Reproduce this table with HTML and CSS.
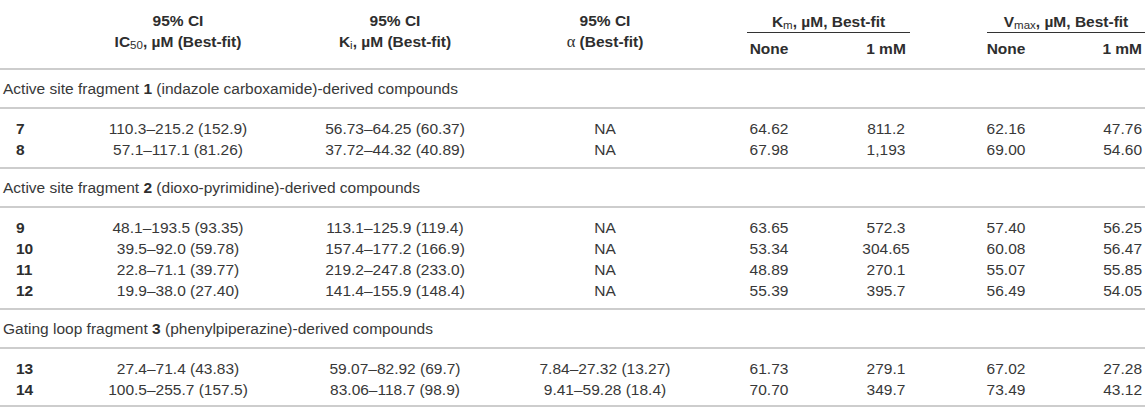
FILE: index.html
```html
<!DOCTYPE html>
<html>
<head>
<meta charset="UTF-8">
<title>Fragment inhibition table</title>
<link rel="stylesheet" href="styles.css">
</head>
<body>
<table class="data">
  <colgroup>
    <col class="c-id"><col class="c-ic"><col class="c-ki"><col class="c-al">
    <col class="c-kn"><col class="c-km"><col class="c-vn"><col class="c-vm">
  </colgroup>
  <thead>
    <tr>
      <th rowspan="2" class="top"></th>
      <th rowspan="2" class="top">95% CI<br>IC<sub>50</sub>, µM (Best-fit)</th>
      <th rowspan="2" class="top">95% CI<br>K<sub>i</sub>, µM (Best-fit)</th>
      <th rowspan="2" class="top">95% CI<br><span class="greek">α</span> (Best-fit)</th>
      <th colspan="2" class="grp"><div class="grp-km">K<sub>m</sub>, µM, Best-fit</div></th>
      <th colspan="2" class="grp"><div class="grp-v">V<sub>max</sub>, µM, Best-fit</div></th>
    </tr>
    <tr class="sub-head">
      <th>None</th>
      <th>1 mM</th>
      <th>None</th>
      <th class="last">1 mM</th>
    </tr>
  </thead>
  <tbody>
    <tr class="section"><td colspan="8">Active site fragment <b>1</b> (indazole carboxamide)-derived compounds</td></tr>
    <tr class="first">
      <td class="id">7</td><td>110.3–215.2 (152.9)</td><td>56.73–64.25 (60.37)</td><td>NA</td>
      <td>64.62</td><td>811.2</td><td>62.16</td><td class="last">47.76</td>
    </tr>
    <tr class="end">
      <td class="id">8</td><td>57.1–117.1 (81.26)</td><td>37.72–44.32 (40.89)</td><td>NA</td>
      <td>67.98</td><td>1,193</td><td>69.00</td><td class="last">54.60</td>
    </tr>
    <tr class="section"><td colspan="8">Active site fragment <b>2</b> (dioxo-pyrimidine)-derived compounds</td></tr>
    <tr class="first">
      <td class="id">9</td><td>48.1–193.5 (93.35)</td><td>113.1–125.9 (119.4)</td><td>NA</td>
      <td>63.65</td><td>572.3</td><td>57.40</td><td class="last">56.25</td>
    </tr>
    <tr>
      <td class="id">10</td><td>39.5–92.0 (59.78)</td><td>157.4–177.2 (166.9)</td><td>NA</td>
      <td>53.34</td><td>304.65</td><td>60.08</td><td class="last">56.47</td>
    </tr>
    <tr>
      <td class="id">11</td><td>22.8–71.1 (39.77)</td><td>219.2–247.8 (233.0)</td><td>NA</td>
      <td>48.89</td><td>270.1</td><td>55.07</td><td class="last">55.85</td>
    </tr>
    <tr class="end">
      <td class="id">12</td><td>19.9–38.0 (27.40)</td><td>141.4–155.9 (148.4)</td><td>NA</td>
      <td>55.39</td><td>395.7</td><td>56.49</td><td class="last">54.05</td>
    </tr>
    <tr class="section"><td colspan="8">Gating loop fragment <b>3</b> (phenylpiperazine)-derived compounds</td></tr>
    <tr class="first">
      <td class="id">13</td><td>27.4–71.4 (43.83)</td><td>59.07–82.92 (69.7)</td><td>7.84–27.32 (13.27)</td>
      <td>61.73</td><td>279.1</td><td>67.02</td><td class="last">27.28</td>
    </tr>
    <tr class="final">
      <td class="id">14</td><td>100.5–255.7 (157.5)</td><td>83.06–118.7 (98.9)</td><td>9.41–59.28 (18.4)</td>
      <td>70.70</td><td>349.7</td><td>73.49</td><td class="last">43.12</td>
    </tr>
  </tbody>
</table>
</body>
</html>
```

FILE: styles.css
```css
body { margin:0; background:#fff; }

.data { width:1145px; table-layout:fixed; border-collapse:collapse; font-family:"Liberation Sans", Arial, sans-serif; font-size:15.5px; line-height:21px; color:#383838; }
.c-id { width:60px; }
.c-ic { width:236px; }
.c-ki { width:198px; }
.c-al { width:222px; }
.c-kn { width:106px; }
.c-km { width:128px; }
.c-vn { width:112px; }
.c-vm { width:83px; }

.data th, .data td { padding:0; text-align:center; white-space:nowrap; }
.data th { font-weight:bold; color:#2e2e2e; }
.data sub { font-size:11.5px; font-weight:normal; line-height:0; vertical-align:-2px; }
.greek { font-family:"Liberation Serif", "Times New Roman", serif; font-weight:normal; font-size:16.5px; }

.data th.top { vertical-align:top; padding-top:10px; border-bottom:2px solid #cdcdcd; }
.data th.grp { padding-top:11px; }
.grp-km { border-bottom:1px solid #333; margin:0 40px 0 31px; }
.grp-v { border-bottom:1px solid #333; margin:0 0 0 37px; }
.sub-head th { padding:5px 0 9px; border-bottom:2px solid #cdcdcd; }

.data .last { text-align:right; padding-right:3px; }
.data td.id { text-align:left; padding-left:16px; font-weight:bold; color:#2e2e2e; }

.section td { text-align:left; padding:8px 3px 8px; border-bottom:2px solid #cdcdcd; }
.section b { color:#2e2e2e; }
.first td { padding-top:9px; }
.end td { padding-bottom:7px; border-bottom:2px solid #cdcdcd; }
.final td { padding-bottom:5px; border-bottom:2px solid #cdcdcd; }
```
